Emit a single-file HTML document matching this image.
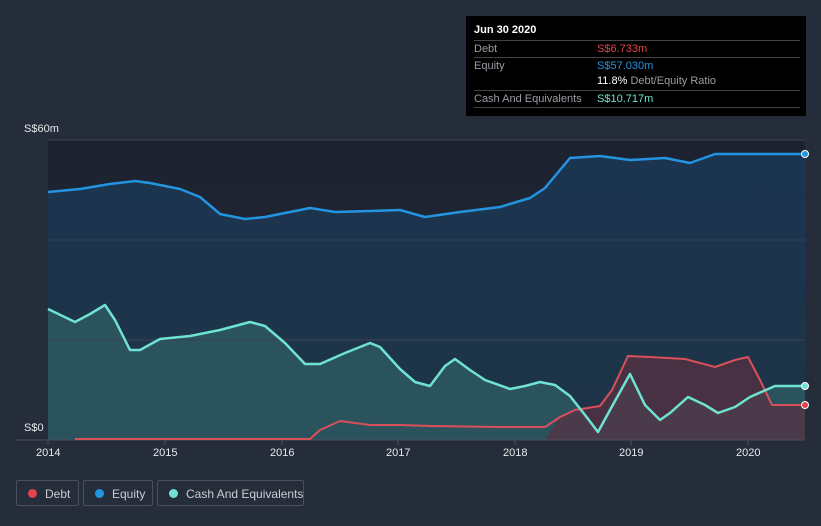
<!DOCTYPE html>
<html><head><style>
body{margin:0;width:821px;height:526px;background:#262d3a;font-family:"Liberation Sans",sans-serif;overflow:hidden;position:relative}
.tt{position:absolute;left:466px;top:16px;width:340px;height:100px;background:#000;color:#fff;font-size:11px}
.tt .r{position:absolute;left:8px;width:326px;border-top:1px solid #444;height:16px;line-height:16px}
.g{color:#9a9ea5}
.leg{position:absolute;top:480px;height:26px;border:1px solid #4a505b;border-radius:2px;color:#c9ccd1;font-size:12px;line-height:26px;box-sizing:border-box;white-space:nowrap}
.leg span{white-space:nowrap}
.leg i{position:absolute;left:11px;top:8px;width:9px;height:9px;border-radius:50%}
.ax{position:absolute;color:#e6e8eb;font-size:11px}
</style></head><body>
<svg width="821" height="526" style="position:absolute;left:0;top:0">
<defs>
<linearGradient id="bg" x1="0" y1="0" x2="0" y2="1"><stop offset="0" stop-color="#1c2230"/><stop offset="1" stop-color="#232b38"/></linearGradient>
<linearGradient id="eq" x1="0" y1="0" x2="0" y2="1"><stop offset="0" stop-color="#1b3550"/><stop offset="1" stop-color="#1e3346"/></linearGradient>
</defs>
<rect x="48" y="140" width="757" height="300" fill="url(#bg)"/>
<path d="M48,192 L80,189 L110,184 L135,181 L150,183 L180,189 L200,197 L220,214 L245,219 L265,217 L285,213 L310,208 L335,212 L370,211 L400,210 L425,217 L460,212 L500,207 L530,198 L545,188 L570,158 L600,156 L630,160 L665,158 L690,163 L715,154 L760,154 L805,154 L805,440 L48,440Z" fill="url(#eq)"/>
<path d="M48,309 L75,322 L90,314 L105,305 L115,320 L130,350 L140,350 L160,339 L190,336 L220,330 L250,322 L265,326 L285,343 L305,364 L320,364 L345,353 L370,343 L380,347 L400,369 L415,382 L430,386 L445,366 L455,359 L470,370 L485,380 L510,389 L525,386 L540,382 L555,385 L570,396 L585,415 L598,432 L610,410 L630,374 L645,405 L660,420 L670,413 L688,397 L705,405 L718,413 L735,407 L750,397 L775,386 L805,386 L805,440 L48,440Z" fill="#2c5660" opacity="0.9"/>
<path d="M560,417 L575,410 L600,406 L612,390 L628,356 L650,357 L685,359 L715,367 L735,360 L748,357 L760,380 L772,405 L805,405 L805,440 L545,440Z" fill="#5a3040" opacity="0.7"/>
<g stroke="#3a4250" stroke-width="1"><line x1="48" y1="140" x2="805" y2="140"/><line x1="48" y1="240" x2="805" y2="240"/><line x1="48" y1="340" x2="805" y2="340"/></g>
<line x1="16" y1="440" x2="805" y2="440" stroke="#4a505b"/>
<g stroke="#4a505b"><line x1="48" y1="440" x2="48" y2="445"/><line x1="165" y1="440" x2="165" y2="445"/><line x1="282" y1="440" x2="282" y2="445"/><line x1="398" y1="440" x2="398" y2="445"/><line x1="515" y1="440" x2="515" y2="445"/><line x1="631" y1="440" x2="631" y2="445"/><line x1="748" y1="440" x2="748" y2="445"/></g>
<path d="M48,192 L80,189 L110,184 L135,181 L150,183 L180,189 L200,197 L220,214 L245,219 L265,217 L285,213 L310,208 L335,212 L370,211 L400,210 L425,217 L460,212 L500,207 L530,198 L545,188 L570,158 L600,156 L630,160 L665,158 L690,163 L715,154 L760,154 L805,154" fill="none" stroke="#2394df" stroke-width="2.5" stroke-linejoin="round"/>
<path d="M75,439 L310,439 L320,430 L340,421 L370,425 L400,425 L430,426 L500,427 L545,427 L560,417 L575,410 L600,406 L612,390 L628,356 L650,357 L685,359 L715,367 L735,360 L748,357 L760,380 L772,405 L805,405" fill="none" stroke="#d9505a" stroke-width="2" stroke-linejoin="round"/>
<path d="M48,309 L75,322 L90,314 L105,305 L115,320 L130,350 L140,350 L160,339 L190,336 L220,330 L250,322 L265,326 L285,343 L305,364 L320,364 L345,353 L370,343 L380,347 L400,369 L415,382 L430,386 L445,366 L455,359 L470,370 L485,380 L510,389 L525,386 L540,382 L555,385 L570,396 L585,415 L598,432 L610,410 L630,374 L645,405 L660,420 L670,413 L688,397 L705,405 L718,413 L735,407 L750,397 L775,386 L805,386" fill="none" stroke="#6fe3d3" stroke-width="2.5" stroke-linejoin="round"/>
<circle cx="805" cy="154" r="3.5" fill="#2394df" stroke="#fff" stroke-width="1"/>
<circle cx="805" cy="386" r="3.5" fill="#6fe3d3" stroke="#fff" stroke-width="1"/>
<circle cx="805" cy="405" r="3.5" fill="#e0444c" stroke="#fff" stroke-width="1"/>
</svg>
<div class="ax" style="left:24px;top:123px">S$60m</div>
<div class="ax" style="left:24px;top:422px">S$0</div>
<div class="ax" style="left:36px;top:447px">2014</div>
<div class="ax" style="left:153px;top:447px">2015</div>
<div class="ax" style="left:270px;top:447px">2016</div>
<div class="ax" style="left:386px;top:447px">2017</div>
<div class="ax" style="left:503px;top:447px">2018</div>
<div class="ax" style="left:619px;top:447px">2019</div>
<div class="ax" style="left:736px;top:447px">2020</div>
<div class="tt">
<div style="position:absolute;left:8px;top:8px;font-weight:bold">Jun 30 2020</div>
<div class="r" style="top:24px"><span class="g">Debt</span><span style="position:absolute;left:123px;color:#e0444c">S$6.733m</span></div>
<div class="r" style="top:41px"><span class="g">Equity</span><span style="position:absolute;left:123px;color:#2394df">S$57.030m</span></div>
<div class="r" style="top:57px;border-top:none"><span style="position:absolute;left:123px">11.8% <span class="g">Debt/Equity Ratio</span></span></div>
<div class="r" style="top:74px;border-bottom:1px solid #444"><span class="g">Cash And Equivalents</span><span style="position:absolute;left:123px;color:#6fe3d3">S$10.717m</span></div>
</div>
<div class="leg" style="left:16px;width:63px"><i style="background:#e0444c"></i><span style="position:absolute;left:28px">Debt</span></div>
<div class="leg" style="left:83px;width:70px"><i style="background:#2394df"></i><span style="position:absolute;left:28px">Equity</span></div>
<div class="leg" style="left:157px;width:147px"><i style="background:#6fe3d3"></i><span style="position:absolute;left:28px">Cash And Equivalents</span></div>
</body></html>
